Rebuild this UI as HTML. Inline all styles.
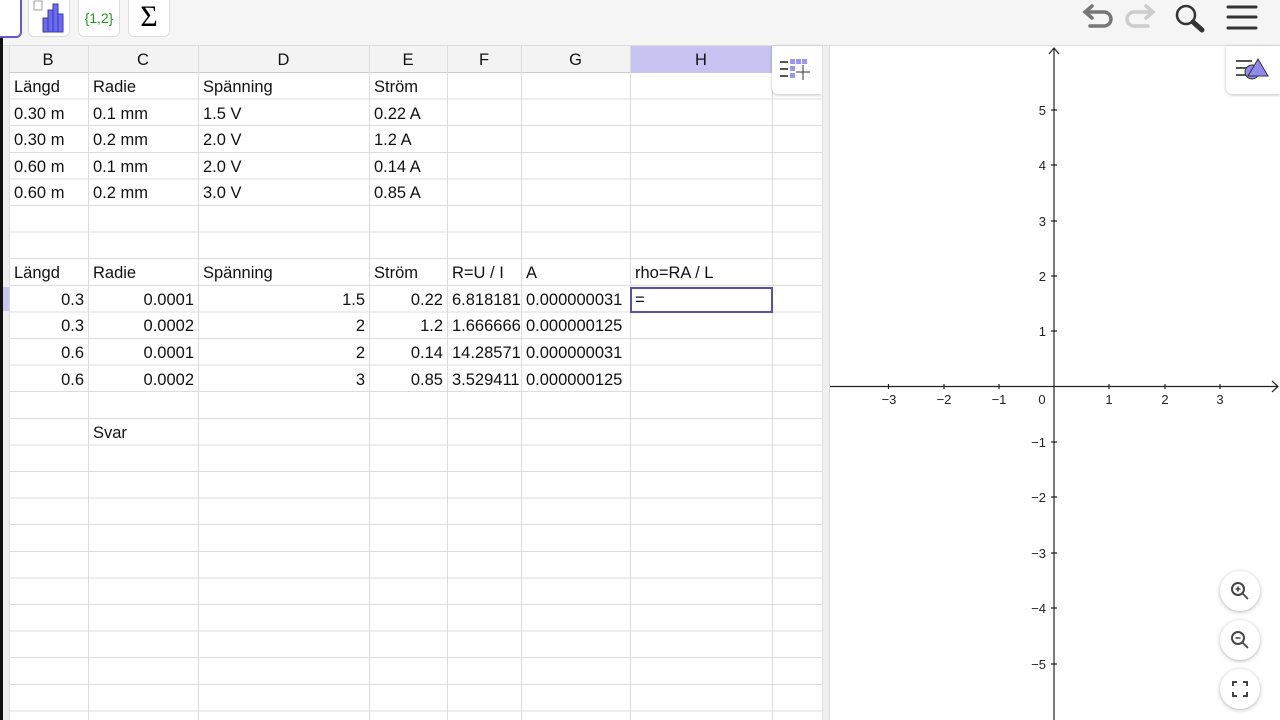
<!DOCTYPE html>
<html><head><meta charset="utf-8"><style>
*{margin:0;padding:0;box-sizing:border-box}
body{width:1280px;height:720px;overflow:hidden;background:#fff;font-family:"Liberation Sans",sans-serif;position:relative}
.a{position:absolute}
.t{position:absolute;font-size:16.5px;color:#111;height:27px;line-height:29px;white-space:nowrap}
.r{text-align:right}
.h{position:absolute;top:46px;height:27px;line-height:28px;font-size:16.5px;text-align:center;color:#111}
.v{position:absolute;top:46px;width:1px;height:674px;background:#dcdcdc}
.yl{position:absolute;font-size:13px;color:#222;right:234px;width:30px;text-align:right}
.xl{position:absolute;font-size:13px;color:#222;top:392px;width:30px;text-align:center}
.btn{position:absolute;left:1220px;width:40px;height:40px;border-radius:50%;background:#fff;box-shadow:0 1px 4px rgba(0,0,0,.3)}
</style></head><body>
<div class="a" style="left:0;top:0;width:1280px;height:46px;background:#f5f5f5;border-bottom:1px solid #ddd"></div>
<div class="a" style="left:0;top:0;width:3px;height:720px;background:#111"></div>
<div class="a" style="left:3px;top:46px;width:6px;height:674px;background:#eee"></div>
<div class="a" style="left:-10px;top:-6px;width:32px;height:44px;border:2px solid #6557d2;border-radius:6px;background:#fff"></div>
<div class="a" style="left:28px;top:-6px;width:42px;height:43px;border:1px solid #ddd;border-radius:6px;background:#fff"></div>
<svg class="a" style="left:32px;top:0" width="36" height="34"><g fill="#6b6bf0" stroke="#3a3ab0" stroke-width="1"><rect x="11" y="18" width="5" height="14"/><rect x="16" y="10" width="5" height="22"/><rect x="21" y="4" width="5" height="28"/><rect x="26" y="14" width="5" height="18"/></g><rect x="2" y="1" width="8" height="9" fill="none" stroke="#888" stroke-width="0.8"/></svg>
<div class="a" style="left:78px;top:-6px;width:42px;height:43px;border:1px solid #ddd;border-radius:6px;background:#fff;color:#1a9a1a;font-size:14px;text-align:center;line-height:46px">{1,2}</div>
<div class="a" style="left:128px;top:-6px;width:42px;height:43px;border:1px solid #ddd;border-radius:6px;background:#fff;font-size:30px;text-align:center;line-height:44px;font-family:'Liberation Serif',serif">Σ</div>
<svg class="a" style="left:1078px;top:2px" width="190" height="32" fill="none" stroke-width="3.5" stroke-linecap="round">
<path d="M8 10 H26 a7 7 0 0 1 0 14 H12" stroke="#777"/><path d="M14 4 L7 10 L14 16" stroke="#777" fill="none"/>
<path d="M74 10 H56 a7 7 0 0 0 0 14 H70" stroke="#ccc"/><path d="M68 4 L75 10 L68 16" stroke="#ccc"/>
<circle cx="108" cy="13" r="9" stroke="#333" stroke-width="2.5"/><path d="M115 20 L124 28" stroke="#333" stroke-width="5"/>
<path d="M150 5 H178 M150 15 H178 M150 26 H178" stroke="#333" stroke-width="3"/></svg>
<div class="a" style="left:9px;top:46px;width:813px;height:27px;background:#f3f3f3;border-bottom:1px solid #ccc"></div>
<div class="a" style="left:630px;top:46px;width:142px;height:27px;background:#c8c4f2"></div>
<div class="a" style="left:9px;top:73px;width:813px;height:647px;background:repeating-linear-gradient(to bottom,transparent 0,transparent 25.6px,#dcdcdc 25.6px,#dcdcdc 26.6px)"></div>
<div class="v" style="left:9px"></div><div class="v" style="left:88px"></div><div class="v" style="left:198px"></div><div class="v" style="left:369px"></div><div class="v" style="left:447px"></div><div class="v" style="left:521px"></div><div class="v" style="left:630px"></div><div class="v" style="left:772px"></div>
<div class="a" style="left:3px;top:287px;width:6px;height:24px;background:#c8c4f2"></div>
<div class="h" style="left:8px;width:80px">B</div><div class="h" style="left:88px;width:110px">C</div><div class="h" style="left:198px;width:171px">D</div><div class="h" style="left:369px;width:78px">E</div><div class="h" style="left:447px;width:74px">F</div><div class="h" style="left:521px;width:109px">G</div><div class="h" style="left:630px;width:142px">H</div>
<div class="a" style="left:772px;top:46px;width:50px;height:48px;background:#fff;box-shadow:0 1px 3px rgba(0,0,0,.25);border-radius:0 0 0 6px"></div>
<svg class="a" style="left:778px;top:56px" width="40" height="30"><g fill="#555"><rect x="2" y="5" width="8" height="2"/><rect x="2" y="12" width="8" height="2"/><rect x="2" y="19" width="8" height="2"/></g><g fill="#9a95ee"><rect x="12" y="3" width="5" height="5"/><rect x="18" y="3" width="5" height="5"/><rect x="24" y="3" width="5" height="5"/><rect x="12" y="10" width="5" height="5"/><rect x="12" y="17" width="5" height="5"/></g><path d="M18 16 H32 M25 9 V24" stroke="#333" stroke-width="1"/></svg>
<div class="a" style="left:822px;top:46px;width:8px;height:674px;background:#f0f0f0;border-left:1px solid #ddd;border-right:1px solid #ddd"></div>
<div class="t" style="left:14px;top:73px">Längd</div><div class="t" style="left:93px;top:73px">Radie</div><div class="t" style="left:203px;top:73px">Spänning</div><div class="t" style="left:374px;top:73px">Ström</div>
<div class="t" style="left:14px;top:99.6px">0.30 m</div><div class="t" style="left:93px;top:99.6px">0.1 mm</div><div class="t" style="left:203px;top:99.6px">1.5 V</div><div class="t" style="left:374px;top:99.6px">0.22 A</div>
<div class="t" style="left:14px;top:126.2px">0.30 m</div><div class="t" style="left:93px;top:126.2px">0.2 mm</div><div class="t" style="left:203px;top:126.2px">2.0 V</div><div class="t" style="left:374px;top:126.2px">1.2 A</div>
<div class="t" style="left:14px;top:152.8px">0.60 m</div><div class="t" style="left:93px;top:152.8px">0.1 mm</div><div class="t" style="left:203px;top:152.8px">2.0 V</div><div class="t" style="left:374px;top:152.8px">0.14 A</div>
<div class="t" style="left:14px;top:179.4px">0.60 m</div><div class="t" style="left:93px;top:179.4px">0.2 mm</div><div class="t" style="left:203px;top:179.4px">3.0 V</div><div class="t" style="left:374px;top:179.4px">0.85 A</div>
<div class="t" style="left:14px;top:259.2px">Längd</div><div class="t" style="left:93px;top:259.2px">Radie</div><div class="t" style="left:203px;top:259.2px">Spänning</div><div class="t" style="left:374px;top:259.2px">Ström</div><div class="t" style="left:452px;top:259.2px">R=U / I</div><div class="t" style="left:526px;top:259.2px">A</div><div class="t" style="left:635px;top:259.2px">rho=RA / L</div>
<div class="t r" style="left:8px;width:76px;top:285.8px">0.3</div><div class="t r" style="left:88px;width:106px;top:285.8px">0.0001</div><div class="t r" style="left:198px;width:167px;top:285.8px">1.5</div><div class="t r" style="left:369px;width:74px;top:285.8px">0.22</div><div class="t" style="left:452px;width:69px;overflow:hidden;top:285.8px">6.818181</div><div class="t" style="left:526px;width:104px;overflow:hidden;top:285.8px">0.000000031</div>
<div class="t r" style="left:8px;width:76px;top:312.4px">0.3</div><div class="t r" style="left:88px;width:106px;top:312.4px">0.0002</div><div class="t r" style="left:198px;width:167px;top:312.4px">2</div><div class="t r" style="left:369px;width:74px;top:312.4px">1.2</div><div class="t" style="left:452px;width:69px;overflow:hidden;top:312.4px">1.666666</div><div class="t" style="left:526px;width:104px;overflow:hidden;top:312.4px">0.000000125</div>
<div class="t r" style="left:8px;width:76px;top:339px">0.6</div><div class="t r" style="left:88px;width:106px;top:339px">0.0001</div><div class="t r" style="left:198px;width:167px;top:339px">2</div><div class="t r" style="left:369px;width:74px;top:339px">0.14</div><div class="t" style="left:452px;width:69px;overflow:hidden;top:339px">14.28571</div><div class="t" style="left:526px;width:104px;overflow:hidden;top:339px">0.000000031</div>
<div class="t r" style="left:8px;width:76px;top:365.6px">0.6</div><div class="t r" style="left:88px;width:106px;top:365.6px">0.0002</div><div class="t r" style="left:198px;width:167px;top:365.6px">3</div><div class="t r" style="left:369px;width:74px;top:365.6px">0.85</div><div class="t" style="left:452px;width:69px;overflow:hidden;top:365.6px">3.529411</div><div class="t" style="left:526px;width:104px;overflow:hidden;top:365.6px">0.000000125</div>
<div class="t" style="left:93px;top:418.8px">Svar</div>
<div class="a" style="left:630px;top:287px;width:143px;height:26px;border:2px solid #5a4fb0;background:#fff"></div>
<div class="t" style="left:635px;top:286px">=</div>
<div class="a" style="left:1226px;top:46px;width:54px;height:48px;background:#fff;box-shadow:0 1px 3px rgba(0,0,0,.25);border-radius:0 0 0 6px"></div>
<svg class="a" style="left:1234px;top:56px" width="40" height="30"><g fill="#555"><rect x="2" y="4" width="16" height="2"/><rect x="2" y="11" width="12" height="2"/><rect x="2" y="18" width="10" height="2"/></g><circle cx="18" cy="16" r="7" fill="#8f8aee" stroke="#333" stroke-width="1"/><path d="M24 3 L34 20 H14 Z" fill="#8f8aee" stroke="#333" stroke-width="1"/></svg>
<svg class="a" style="left:830px;top:46px" width="450" height="674">
<g stroke="#222" stroke-width="1.2" fill="none"><path d="M224 674 V2 M219 8 L224 2 L229 8"/><path d="M0 340.5 H448 M442 335 L448 340.5 L442 346"/>
<path d="M58.5 338 V343 M114 338 V343 M169 338 V343 M279 338 V343 M335 338 V343 M390 338 V343"/>
<path d="M221 64 H227 M221 119 H227 M221 175 H227 M221 230 H227 M221 285 H227 M221 396 H227 M221 451 H227 M221 507 H227 M221 562 H227 M221 618 H227"/></g></svg>
<div class="xl" style="left:874px">−3</div><div class="xl" style="left:929px">−2</div><div class="xl" style="left:984px">−1</div><div class="xl" style="left:1027px">0</div><div class="xl" style="left:1094px">1</div><div class="xl" style="left:1150px">2</div><div class="xl" style="left:1205px">3</div>
<div class="yl" style="top:103px">5</div><div class="yl" style="top:158px">4</div><div class="yl" style="top:214px">3</div><div class="yl" style="top:269px">2</div><div class="yl" style="top:324px">1</div><div class="yl" style="top:435px">−1</div><div class="yl" style="top:490px">−2</div><div class="yl" style="top:546px">−3</div><div class="yl" style="top:601px">−4</div><div class="yl" style="top:657px">−5</div>
<div class="btn" style="top:571px"><svg width="40" height="40" fill="none" stroke="#444" stroke-width="2"><circle cx="18" cy="18" r="6"/><path d="M22 22 L28 28 M15.5 18 H20.5 M18 15.5 V20.5" stroke-width="1.6"/></svg></div>
<div class="btn" style="top:620px"><svg width="40" height="40" fill="none" stroke="#444" stroke-width="2"><circle cx="18" cy="18" r="6"/><path d="M22 22 L28 28 M15.5 18 H20.5" stroke-width="1.6"/></svg></div>
<div class="btn" style="top:669px"><svg width="40" height="40" fill="none" stroke="#444" stroke-width="2"><path d="M13 17 V13 H17 M23 13 H27 V17 M27 23 V27 H23 M17 27 H13 V23"/></svg></div>
</body></html>
